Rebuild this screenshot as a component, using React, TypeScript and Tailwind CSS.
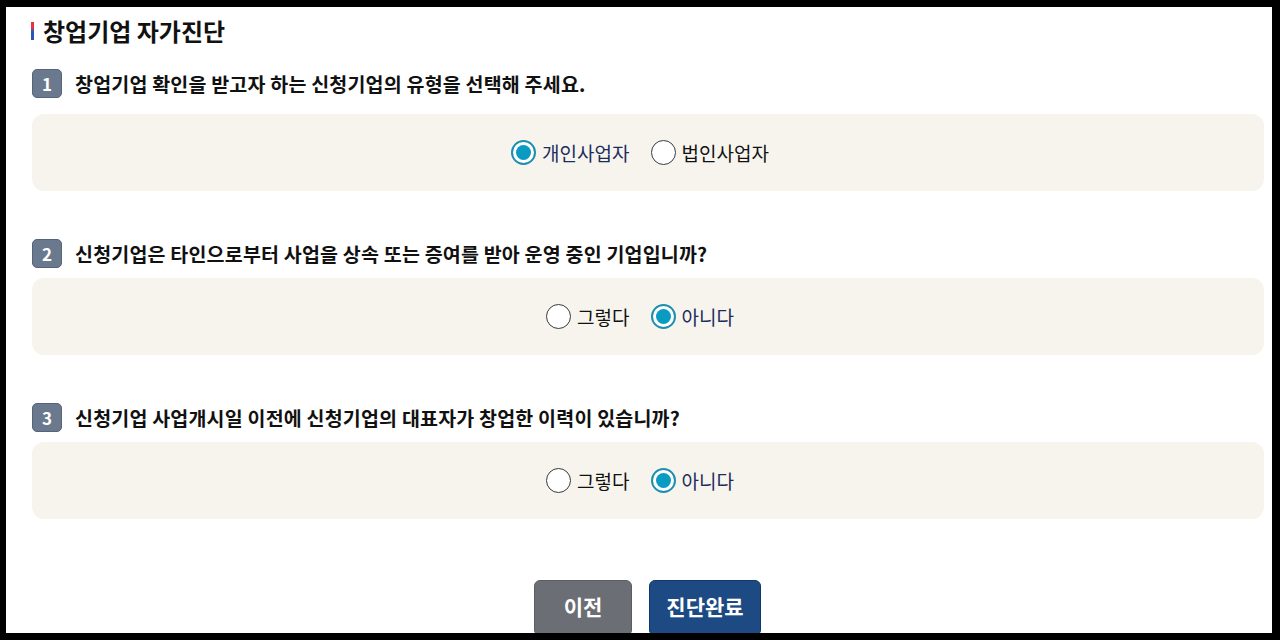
import React, { useState } from 'react';

type Question = {
  no: number;
  text: string;
  options: string[];
  initial: number;
};

const questions: Question[] = [
  { no: 1, text: '창업기업 확인을 받고자 하는 신청기업의 유형을 선택해 주세요.', options: ['개인사업자', '법인사업자'], initial: 0 },
  { no: 2, text: '신청기업은 타인으로부터 사업을 상속 또는 증여를 받아 운영 중인 기업입니까?', options: ['그렇다', '아니다'], initial: 1 },
  { no: 3, text: '신청기업 사업개시일 이전에 신청기업의 대표자가 창업한 이력이 있습니까?', options: ['그렇다', '아니다'], initial: 1 },
];

const Radio: React.FC<{ checked: boolean; label: string; onClick: () => void }> = ({ checked, label, onClick }) => (
  <button type="button" onClick={onClick} className="flex items-center gap-[6px]">
    {checked ? (
      <span className="w-[25px] h-[25px] rounded-full border-2 border-[#1c8fb0] bg-white flex items-center justify-center">
        <span className="w-[15px] h-[15px] rounded-full bg-[#0a9bc2]" />
      </span>
    ) : (
      <span className="w-[25px] h-[25px] rounded-full border border-[#3a3a3a] bg-white" />
    )}
    <span className={`text-[19px] leading-[26px] ${checked ? 'text-[#1b2d5c]' : 'text-[#111]'}`}>{label}</span>
  </button>
);

const App: React.FC = () => {
  const [answers, setAnswers] = useState<number[]>(questions.map((q) => q.initial));

  return (
    <div
      className="h-[640px] bg-black pt-[7px] pl-[6px] pr-[8px] pb-[7px] overflow-hidden"
      style={{ fontFamily: '"Noto Sans CJK KR", "Noto Sans", sans-serif' }}
    >
      <div className="h-full bg-white overflow-hidden pl-[25px] pr-[8px] pt-[9px]">
        {/* Title */}
        <div className="flex items-center h-[30px]">
          <span className="w-[3px] h-[18px] bg-[linear-gradient(to_bottom,#e6343e_0%,#e6343e_30%,#2a55c0_55%,#2a55c0_100%)]" />
          <h1 className="ml-[9px] text-[24px] leading-[30px] font-bold text-[#111]">창업기업 자가진단</h1>
        </div>

        {questions.map((q, qi) => (
          <div key={q.no} className={qi === 0 ? 'mt-[23px]' : 'mt-[48px]'}>
            <div className={`flex items-center h-[29px] ${qi === 0 ? 'mb-[16px]' : 'mb-[10px]'}`}>
              <span className="ml-[1px] w-[30px] h-[29px] rounded-[5px] bg-[#6a798d] border border-[#55647a] text-white font-bold text-[17px] flex items-center justify-center">
                {q.no}
              </span>
              <span className="ml-[13px] text-[19.5px] font-bold text-[#111] tracking-[0.2px]">{q.text}</span>
            </div>
            <div className="ml-[1px] h-[77px] rounded-[12px] bg-[#f7f4ee] flex items-center justify-center gap-[21px] pr-[16px]">
              {q.options.map((opt, oi) => (
                <Radio
                  key={opt}
                  label={opt}
                  checked={answers[qi] === oi}
                  onClick={() => setAnswers(answers.map((a, i) => (i === qi ? oi : a)))}
                />
              ))}
            </div>
          </div>
        ))}

        <div className="mt-[61px] flex justify-center gap-[17px]">
          <button className="w-[98px] h-[56px] pb-[3px] rounded-[6px] bg-[#6b6e75] border border-[#5a5d64] text-white font-bold text-[21px]">이전</button>
          <button className="w-[112px] h-[56px] pb-[3px] rounded-[6px] bg-[#1d4a82] border border-[#123868] text-white font-bold text-[21px]">진단완료</button>
        </div>
      </div>
    </div>
  );
};

export default App;
